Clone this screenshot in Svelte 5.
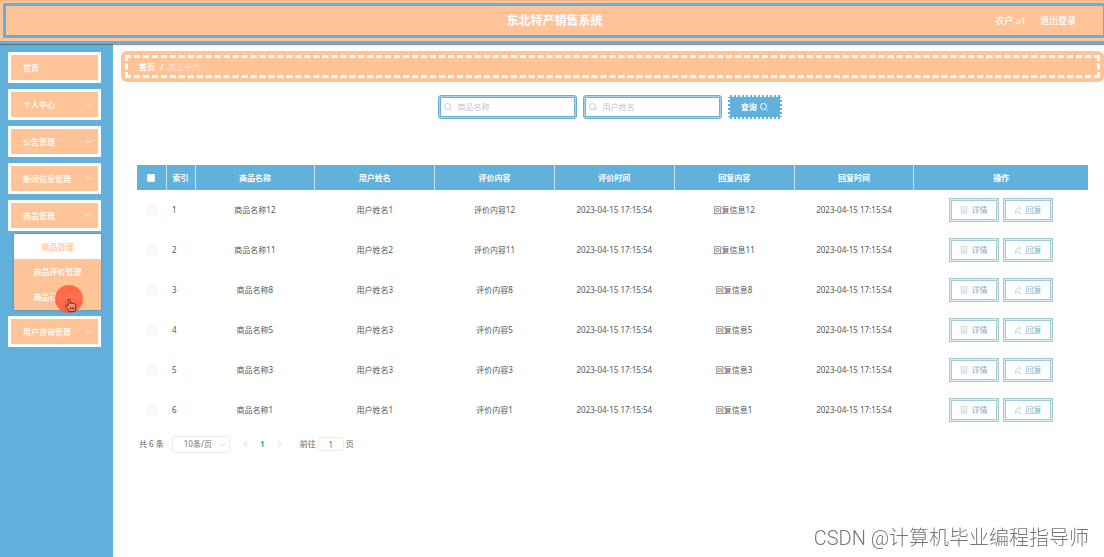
<script>
	// Sidebar entries, the open one carries its children
	const menu = [
		{ name: '首页' },
		{ name: '个人中心', arrow: true },
		{ name: '公告管理', arrow: true },
		{ name: '新闻信息管理', arrow: true },
		{ name: '商品管理', arrow: true, children: ['商品管理', '商品评价管理', '商品订单管理'] },
		{ name: '用户咨询管理', arrow: true }
	];

	const columns = ['商品名称', '用户姓名', '评价内容', '评价时间', '回复内容', '回复时间'];

	const time = '2023-04-15 17:15:54';
	const rows = [
		{ no: 12, user: 1 },
		{ no: 11, user: 2 },
		{ no: 8, user: 3 },
		{ no: 5, user: 3 },
		{ no: 3, user: 3 },
		{ no: 1, user: 1 }
	];

	let activeSub = $state('商品管理');
	let goods = $state('');
	let user = $state('');
	let page = $state('1');
	let checked = $state(rows.map(() => false));

	const toggleAll = (event) => {
		checked = rows.map(() => event.target.checked);
	};
</script>

{#snippet searchIcon()}
	<svg class="search-icon" viewBox="0 0 16 16" aria-hidden="true">
		<circle cx="7" cy="7" r="6" />
		<path d="M11.500 11.500l3.500 3.500" />
	</svg>
{/snippet}

<div class="page">
	<header>
		<div class="bar">
			<h1>东北特产销售系统</h1>
			<nav>
				<span>农户 a1</span>
				<a href="#logout">退出登录</a>
			</nav>
		</div>
	</header>

	<div class="body">
		<aside>
			{#each menu as item}
				<div class="group">
					<button class="item">
						{item.name}
						{#if item.arrow}
							<svg class="arrow" viewBox="0 0 12 12" aria-hidden="true"><path d="M1.500 3.500L6 8l4.500-4.500" /></svg>
						{/if}
					</button>
					{#if item.children}
						<div class="submenu">
							{#each item.children as child}
								<button class:active={child === activeSub} onclick={() => (activeSub = child)}>{child}</button>
							{/each}
							<!-- click marker with the hand pointer -->
							<span class="marker">
								<svg viewBox="0 0 16 18" aria-hidden="true">
									<path d="M5 10V2.600a1.300 1.300 0 0 1 2.600 0V7l.2-.6a1.200 1.200 0 0 1 2.300.5l.2-.3a1.200 1.200 0 0 1 2.200.7l.3-.1a1.100 1.100 0 0 1 1.700 1V12c0 2-1 2.700-1.200 4.500H6.500C6 14 3.500 12.500 2 10.200c-.8-1.300.8-2.200 1.700-1.300z" />
									<path d="M8 11v3M10 11v3M12 11v3" />
								</svg>
							</span>
						</div>
					{/if}
				</div>
			{/each}
		</aside>

		<main>
			<div class="crumb">
				<div class="crumb-inner">
					<a href="#home">首页</a>
					<span class="slash">/</span>
					<span class="here">商品评价</span>
				</div>
			</div>

			<form class="search" onsubmit={(event) => event.preventDefault()}>
				<label class="field">
					{@render searchIcon()}
					<input type="text" placeholder="商品名称" aria-label="商品名称" bind:value={goods} />
				</label>
				<label class="field">
					{@render searchIcon()}
					<input type="text" placeholder="用户姓名" aria-label="用户姓名" bind:value={user} />
				</label>
				<button class="query">查询 {@render searchIcon()}</button>
			</form>

			<div class="content">
				<table>
					<colgroup>
						<col class="c-check" />
						<col class="c-index" />
						{#each columns as column}
							<col class="c-data" />
						{/each}
						<col />
					</colgroup>
					<thead>
						<tr>
							<th><input type="checkbox" aria-label="全选" onchange={toggleAll} /></th>
							<th>索引</th>
							{#each columns as column}
								<th>{column}</th>
							{/each}
							<th>操作</th>
						</tr>
					</thead>
					<tbody>
						{#each rows as row, i}
							<tr>
								<td><input type="checkbox" aria-label="选择" bind:checked={checked[i]} /></td>
								<td class="index">{i + 1}</td>
								<td>商品名称{row.no}</td>
								<td>用户姓名{row.user}</td>
								<td>评价内容{row.no}</td>
								<td>{time}</td>
								<td>回复信息{row.no}</td>
								<td>{time}</td>
								<td>
									<div class="actions">
										<button>
											<svg viewBox="0 0 16 16" aria-hidden="true">
												<path d="M2.500 1.500h11v13h-11zM5 5h3M5 8h6M5 11h6" />
											</svg>
											详情
										</button>
										<button>
											<svg viewBox="0 0 16 16" aria-hidden="true">
												<path d="M9.500 1.500l3.500 2-6 9-4.500 1.500.5-4.500zM8 14.500h7" />
											</svg>
											回复
										</button>
									</div>
								</td>
							</tr>
						{/each}
					</tbody>
				</table>

				<div class="pager">
					<span>共 6 条</span>
					<span class="size">
						<select aria-label="每页条数">
							<option>10条/页</option>
							<option>20条/页</option>
						</select>
						<svg class="arrow" viewBox="0 0 12 12" aria-hidden="true"><path d="M1.500 3.500L6 8l4.500-4.500" /></svg>
					</span>
					<div class="pages">
						<button aria-label="上一页"><svg class="arrow" viewBox="0 0 12 12"><path d="M8 1.500L3.500 6 8 10.500" /></svg></button>
						<button class="current">1</button>
						<button aria-label="下一页"><svg class="arrow" viewBox="0 0 12 12"><path d="M4 1.500L8.500 6 4 10.500" /></svg></button>
					</div>
					<label class="jump">前往 <input type="text" bind:value={page} /> 页</label>
				</div>
			</div>
		</main>
	</div>

	<div class="watermark">CSDN @计算机毕业编程指导师</div>
</div>

<style>
	:global(body) {
		background: #fff;
	}

	.page {
		--blue: #62b0dc;
		--orange: #ffc398;
		min-height: 100vh;
		display: flex;
		flex-direction: column;
		font-family: 'Noto Sans', 'Noto Sans CJK SC', sans-serif;
		font-size: 8px;
		line-height: 12px;
		color: #555;
	}

	.page * {
		box-sizing: border-box;
	}

	button, input, select {
		font: inherit;
		color: inherit;
		margin: 0;
		padding: 0;
		border: 0;
		background: none;
	}

	a {
		color: inherit;
		text-decoration: none;
	}

	svg {
		fill: none;
		stroke: currentColor;
		flex: none;
	}

	header {
		position: relative;
		padding: 3px 0 3px 3px;
		background: var(--orange);
		border-bottom: 3px solid var(--blue);
		box-shadow: inset 0 1px #efb58d, 0 1px 1px rgba(80, 80, 80, 0.6);
	}

	.bar {
		height: 35px;
		display: grid;
		grid-template-columns: 1fr auto 1fr;
		align-items: center;
		border: 3px solid var(--blue);
		border-right-width: 1px;
		color: #fff;
	}

	h1 {
		grid-column: 2;
		margin: 0;
		font-size: 12px;
		line-height: 16px;
	}

	nav {
		display: flex;
		justify-content: flex-end;
		gap: 14px;
		padding-right: 27px;
		font-size: 9px;
		font-weight: 500;
	}

	.body {
		flex: 1;
		display: flex;
	}

	aside {
		width: 113px;
		flex: none;
		padding: 8px 12px 8px 8px;
		background: var(--blue);
		color: #fff;
		font-weight: 500;
	}

	.group {
		margin-bottom: 6px;
	}

	.item {
		display: flex;
		align-items: center;
		justify-content: space-between;
		width: 100%;
		height: 31px;
		padding: 0 6px 0 12px;
		border: 3px solid #fff;
		background: var(--orange);
	}

	.arrow {
		width: 7px;
		height: 7px;
		stroke-width: 1.4;
	}

	.submenu {
		position: relative;
		margin: 3px 0 0 6px;
		padding-bottom: 1px;
		background: var(--orange);
		box-shadow: 0 0 2px #777;
	}

	.submenu button {
		display: block;
		width: 100%;
		height: 25px;
	}

	.submenu .active {
		background: #fff;
		color: var(--orange);
	}

	.marker {
		position: absolute;
		left: 41px;
		bottom: -3px;
		width: 28px;
		height: 28px;
		border-radius: 50%;
		background: rgba(255, 83, 48, 0.8);
	}

	.marker svg {
		position: absolute;
		left: 9px;
		top: 13px;
		width: 13px;
		height: 15px;
		fill: #f78f7e;
		stroke: #4b1712;
	}

	main {
		flex: 1;
		min-width: 0;
		padding: 7px 0 0 8px;
	}

	.crumb {
		padding: 4px;
		border-radius: 6px;
		background: var(--orange);
	}

	.crumb-inner {
		display: flex;
		align-items: center;
		gap: 5px;
		height: 23px;
		padding-left: 11px;
		border: 3px dashed #fff;
		color: #fff;
	}

	.crumb-inner a,
	.slash {
		font-weight: bold;
	}

	.here {
		color: #eee0d6;
	}

	.search {
		display: flex;
		justify-content: center;
		gap: 6px;
		padding: 13px 0 0;
		margin-left: -6px;
	}

	.field {
		display: flex;
		align-items: center;
		gap: 6px;
		width: 139px;
		height: 24px;
		padding: 0 3px;
		border: 3px double #69b0d3;
		border-radius: 3px;
		background: linear-gradient(#fff, #fff) padding-box, #a9d5e6 border-box;
		color: #c4c8cc;
	}

	.field input {
		flex: 1;
		min-width: 0;
		outline: none;
		color: #555;
	}

	.field input::placeholder {
		color: #c0c4cc;
	}

	.search-icon {
		width: 8px;
		height: 8px;
		stroke-width: 2;
	}

	.query {
		display: flex;
		align-items: center;
		justify-content: center;
		gap: 3px;
		width: 54px;
		height: 24px;
		border: 2px dotted #fff;
		background: var(--blue);
		color: #fff;
		font-weight: bold;
	}

	.content {
		padding: 46px 16px 0 16px;
	}

	table {
		width: 100%;
		table-layout: fixed;
		border-collapse: collapse;
	}

	.c-check, .c-index {
		width: 29px;
	}

	.c-data {
		width: 12.6%;
	}

	th {
		height: 25px;
		padding: 0;
		background: var(--blue);
		color: #fff;
		border-left: 1px solid #c9e4f2;
	}

	th:first-child {
		border-left: 0;
	}

	td {
		height: 40px;
		padding: 0;
		text-align: center;
		border-bottom: 1px solid #fcfcfc;
	}

	.index {
		text-align: left;
		padding-left: 6px;
	}

	input[type='checkbox'] {
		display: block;
		appearance: none;
		width: 8px;
		height: 8px;
		margin: 0 auto;
		border: 1px solid #f0f0f0;
		border-radius: 1px;
		background: #fff;
	}

	input[type='checkbox']:checked {
		background: var(--blue);
	}

	.actions {
		display: flex;
		justify-content: center;
		gap: 4px;
	}

	.actions button {
		display: flex;
		align-items: center;
		justify-content: center;
		gap: 3px;
		width: 50px;
		height: 24px;
		border: 3px double #a3cbd6;
		background: linear-gradient(#fff, #fff) padding-box, #dceef2 border-box;
		color: #79b4cd;
	}

	.actions svg {
		width: 8px;
		height: 8px;
	}

	.pager {
		display: flex;
		align-items: center;
		padding: 5px 2px;
		color: #666;
	}

	.size {
		position: relative;
		margin-left: 8px;
		color: #777;
	}

	.size select {
		display: block;
		appearance: none;
		width: 58px;
		height: 17px;
		padding-left: 11px;
		border: 1px solid #eee;
		border-radius: 2px;
	}

	.size .arrow {
		position: absolute;
		right: 4px;
		top: 5px;
		color: #c0c4cc;
		stroke-width: 1;
	}

	.pages {
		display: flex;
		margin-left: 7px;
		color: #aaa;
	}

	.pages .arrow {
		stroke-width: 1;
	}

	.pages button {
		width: 17px;
		height: 16px;
	}

	.pages .current {
		color: #1bb394;
		font-weight: bold;
	}

	.jump {
		display: flex;
		align-items: center;
		gap: 2px;
		margin-left: 12px;
	}

	.jump input {
		width: 26px;
		height: 14px;
		text-align: center;
		border: 1px solid #eee;
		border-radius: 2px;
	}

	.watermark {
		position: fixed;
		right: 15px;
		bottom: 6px;
		font-family: Roboto, 'Noto Sans CJK SC', sans-serif;
		font-size: 20px;
		font-weight: 300;
		line-height: 26px;
		color: #777;
	}
</style>
